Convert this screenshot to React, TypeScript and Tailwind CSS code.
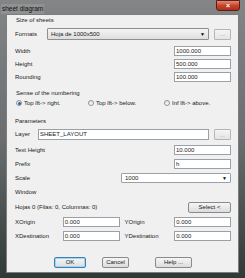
import React from 'react';

const font = { fontFamily: '"Liberation Sans", Arial, sans-serif' };

const TextBox = ({ value, className = '' }: { value: string; className?: string }) => (
  <div
    className={`h-[10px] bg-white border border-[#9aa0a8] flex items-center px-[1px] text-[#222] ${className}`}
  >
    {value}
  </div>
);

const Combo = ({ value, className = '' }: { value: string; className?: string }) => (
  <div
    className={`h-full flex items-center justify-between pl-[3px] pr-[3px] border border-[#8e8f8f] rounded-[1px] bg-gradient-to-b from-[#f4f4f4] to-[#dedede] ${className}`}
  >
    <span>{value}</span>
    <span className="text-[5px] text-black leading-none">▼</span>
  </div>
);

const DotsButton = () => (
  <div className="w-[17px] h-[11px] ml-[5px] border border-[#b5b5b5] rounded-[1px] bg-gradient-to-b from-[#f4f4f4] to-[#e4e4e4] flex items-center justify-center text-[#9a9a9a] leading-none">
    ...
  </div>
);

const Radio = ({ checked, label, className = '' }: { checked?: boolean; label: string; className?: string }) => (
  <div className={`flex items-center gap-[2px] ${className}`}>
    <div className="w-[6px] h-[6px] rounded-full border border-[#8c9299] bg-gradient-to-b from-[#e6e6e6] to-[#fafafa] flex items-center justify-center">
      {checked && <div className="w-[3px] h-[3px] rounded-full bg-[#2a5fb0]" />}
    </div>
    <span>{label}</span>
  </div>
);

const PushButton = ({ label, primary, className = '' }: { label: string; primary?: boolean; className?: string }) => (
  <div
    className={`h-[11px] flex items-center justify-center rounded-[2px] border bg-gradient-to-b from-[#f6f6f6] to-[#dcdcdc] ${
      primary ? 'border-[#3c7fb1] shadow-[inset_0_0_0_1px_#9fd5f5]' : 'border-[#8a8a8a]'
    } ${className}`}
  >
    {label}
  </div>
);

export default function App() {
  return (
    <div
      className="w-[245px] h-[278px] flex flex-col px-[6px] pb-[5px] bg-gradient-to-b from-[#838587] via-[#6a6e70] to-[#2f3a35] text-[6px] text-[#1a1a1a] overflow-hidden"
      style={font}
    >
      {/* title bar */}
      <div className="h-[14px] flex items-start justify-between">
        <span className="mt-[4px] -ml-[5px] text-[6.5px] text-[#101010] bg-[#9a9a9a]/60 px-[1px]">sheet diagram</span>
        <div className="w-[24px] h-[11px] mr-[-1px] rounded-b-[3px] border border-[#5b1d14] bg-gradient-to-b from-[#e28a74] via-[#c7442b] to-[#b02e18] flex items-center justify-center text-white text-[7px] font-bold leading-none">
          ×
        </div>
      </div>

      {/* client area */}
      <div className="flex-1 bg-[#f0f0f0] border border-[#7d7d7d] flex flex-col pl-[8px] pr-[7px]">
        <div className="h-[10px] mt-[0px] flex items-center pl-[1px]">Size of sheets</div>

        <div className="h-[12px] mt-[3px] flex items-center">
          <span className="w-[32px]">Formats</span>
          <Combo value="Hoja de 1000x500" className="flex-1" />
          <DotsButton />
        </div>

        <div className="h-[10px] mt-[6px] flex items-center justify-between">
          <span>Width</span>
          <TextBox value="1000.000" className="w-[57px]" />
        </div>
        <div className="h-[10px] mt-[3px] flex items-center justify-between">
          <span>Height</span>
          <TextBox value="500.000" className="w-[57px]" />
        </div>
        <div className="h-[10px] mt-[3px] flex items-center justify-between">
          <span>Rounding</span>
          <TextBox value="100.000" className="w-[57px]" />
        </div>

        <div className="h-[10px] mt-[6px] flex items-center pl-[1px]">Sense of the numbering</div>
        <div className="h-[10px] flex items-center pl-[1px]">
          <Radio checked label="Top lft-> right." className="w-[72px]" />
          <Radio label="Top lft-> below." className="w-[76px]" />
          <Radio label="Inf lft-> above." />
        </div>

        <div className="h-[10px] mt-[8px] flex items-center">Parameters</div>
        <div className="h-[11px] mt-[3px] flex items-center">
          <span className="w-[23px]">Layer</span>
          <TextBox value="SHEET_LAYOUT" className="flex-1 h-[11px]" />
          <DotsButton />
        </div>
        <div className="h-[10px] mt-[5px] flex items-center justify-between">
          <span>Text Height</span>
          <TextBox value="10.000" className="w-[57px]" />
        </div>
        <div className="h-[10px] mt-[4px] flex items-center justify-between">
          <span>Prefix</span>
          <TextBox value="h" className="w-[57px]" />
        </div>
        <div className="h-[10px] mt-[4px] flex items-center justify-between">
          <span>Scale</span>
          <Combo value="1000" className="w-[110px] bg-none bg-white from-white to-white border-[#9aa0a8]" />
        </div>

        <div className="h-[10px] mt-[4px] flex items-center">Window</div>
        <div className="h-[10px] mt-[5px] flex items-center justify-between">
          <span>Hojas 0 (Filas: 0, Columnas: 0)</span>
          <PushButton label="Select <" className="w-[43px] h-[10px]" />
        </div>
        <div className="h-[10px] mt-[5px] flex items-center">
          <span className="w-[48px]">XOrigin</span>
          <TextBox value="0.000" className="w-[57px]" />
          <span className="ml-[5px] w-[50px]">YOrigin</span>
          <TextBox value="0.000" className="w-[57px]" />
        </div>
        <div className="h-[10px] mt-[4px] flex items-center">
          <span className="w-[48px]">XDestination</span>
          <TextBox value="0.000" className="w-[57px]" />
          <span className="ml-[5px] w-[50px]">YDestination</span>
          <TextBox value="0.000" className="w-[57px]" />
        </div>

        <div className="h-[11px] mt-[16px] flex items-center pl-[39px]">
          <PushButton primary label="OK" className="w-[32px]" />
          <PushButton label="Cancel" className="w-[27px] ml-[16px]" />
          <PushButton label="Help ..." className="w-[37px] ml-[26px]" />
        </div>
      </div>
    </div>
  );
}
